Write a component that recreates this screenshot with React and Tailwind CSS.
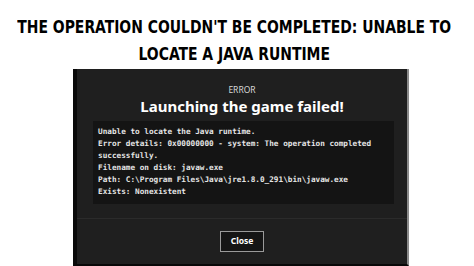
import React from "react";

export default function App() {
  const lines = [
    "Unable to locate the Java runtime.",
    "Error details: 0x00000000 - system: The operation completed",
    "successfully.",
    "Filename on disk: javaw.exe",
    "Path: C:\\Program Files\\Java\\jre1.8.0_291\\bin\\javaw.exe",
    "Exists: Nonexistent",
  ];

  return (
    <div className="w-[474px] h-[266px] overflow-hidden bg-white">
      {/* headline */}
      <div className="pt-[13px] flex justify-center pr-[6px]">
        <h1 className="shrink-0 text-center whitespace-nowrap scale-x-[0.86] font-['DejaVu_Sans_Condensed','DejaVu_Sans',sans-serif] font-bold text-[18px] leading-[27px] text-black">
          THE OPERATION COULDN'T BE COMPLETED: UNABLE TO
          <br />
          LOCATE A JAVA RUNTIME
        </h1>
      </div>

      {/* launcher dialog */}
      <div className="mt-[2px] ml-[73px] w-[336px] h-[197px] bg-[#1f1f1f] border-l-4 border-l-[#0a0a0a] border-r-2 border-r-[#8a8a8a] border-b-2 border-b-[#080808] flex flex-col font-['Noto_Sans',sans-serif]">
        <div className="pt-[15px] text-center text-[8.5px] leading-[12px] text-[#d8d8d8]">ERROR</div>
        <div className="text-center text-[15px] leading-[20px] font-bold text-white">Launching the game failed!</div>

        <div className="mt-[5px] ml-[16px] w-[301px] h-[83px] bg-[#141414] px-[5px] pt-[5px] font-['DejaVu_Sans_Mono',monospace] font-bold text-[7.7px] leading-[12px] text-[#e6e6e6]">
          {lines.map((l, i) => (
            <div key={i} className="whitespace-pre">{l}</div>
          ))}
        </div>

        <div className="mt-[14px] border-t border-[#2b2b2b] flex justify-center pt-[12px]">
          <button className="w-[44px] h-[21px] border border-[#9a9a9a] bg-[#151515] text-white text-[8.5px] font-bold">
            Close
          </button>
        </div>
      </div>
    </div>
  );
}
